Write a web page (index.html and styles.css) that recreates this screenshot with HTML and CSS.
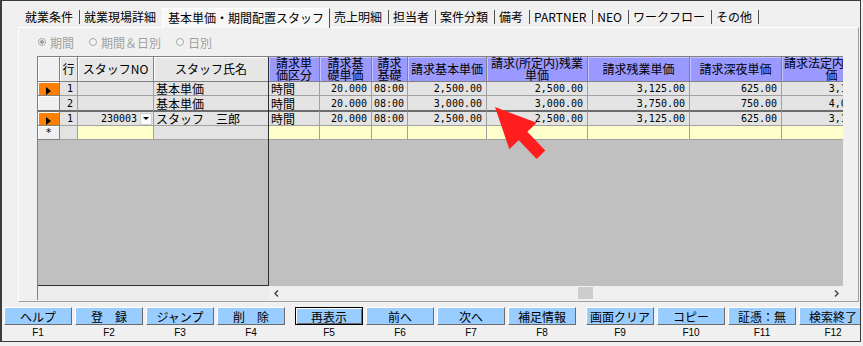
FILE: index.html
```html
<!DOCTYPE html>
<html lang="ja">
<head>
  <meta charset="UTF-8">
  <title>基本単価・期間配置スタッフ</title>
  <link rel="stylesheet" href="styles.css">
</head>
<body>

  <div class="window">

    <!-- Tabs -->
    <div class="tabs">
      <span class="tab">就業条件</span>
      <span class="tab no-sep">就業現場詳細</span>
      <span class="tab active">基本単価・期間配置スタッフ</span>
      <span class="tab">売上明細</span>
      <span class="tab">担当者</span>
      <span class="tab">案件分類</span>
      <span class="tab">備考</span>
      <span class="tab">PARTNER</span>
      <span class="tab">NEO</span>
      <span class="tab">ワークフロー</span>
      <span class="tab">その他</span>
    </div>

    <!-- Tab page -->
    <div class="page">
      <div class="radios">
        <span class="radio checked"><i></i>期間</span>
        <span class="radio"><i></i>期間＆日別</span>
        <span class="radio"><i></i>日別</span>
      </div>

      <div class="grid">
        <!-- frozen columns -->
        <div class="pane pane-left">
          <div class="pane-body">
            <table class="cells cells-left">
              <colgroup>
                <col class="c-mark"><col class="c-gyo"><col class="c-no"><col class="c-name">
              </colgroup>
              <tr class="head"><th class="mark"></th><th>行</th><th>スタッフNO</th><th>スタッフ氏名</th></tr>
              <tr><td class="mark cur"><i></i></td><td class="num">1</td><td></td><td>基本単価</td></tr>
              <tr class="split"><td class="mark"></td><td class="num">2</td><td></td><td>基本単価</td></tr>
              <tr><td class="mark cur"><i></i></td><td class="num">1</td><td class="num"><span class="combo">230003<b></b></span></td><td>スタッフ　三郎</td></tr>
              <tr class="new"><td class="mark star">*</td><td></td><td class="blank"></td><td></td></tr>
            </table>
            <div class="fill"></div>
          </div>
          <div class="pane-foot"></div>
        </div>

        <!-- scrolling columns -->
        <div class="pane pane-right">
          <div class="pane-body">
            <table class="cells cells-right">
              <colgroup>
                <col class="c-kbn"><col class="c-kiso"><col class="c-time"><col class="c-kihon">
                <col class="c-shotei"><col class="c-zan"><col class="c-shinya"><col class="c-hotei">
              </colgroup>
              <tr class="head">
                <th>請求単<br>価区分</th><th>請求基<br>礎単価</th><th>請求<br>基礎</th><th>請求基本単価</th>
                <th>請求(所定内)残業<br>単価</th><th>請求残業単価</th><th>請求深夜単価</th><th>請求法定内残業単<br>価</th>
              </tr>
              <tr>
                <td>時間</td><td class="num">20.000</td><td class="num">08:00</td><td class="num">2,500.00</td>
                <td class="num">2,500.00</td><td class="num">3,125.00</td><td class="num">625.00</td><td class="num">3,125.00</td>
              </tr>
              <tr class="split">
                <td>時間</td><td class="num">20.000</td><td class="num">08:00</td><td class="num">3,000.00</td>
                <td class="num">3,000.00</td><td class="num">3,750.00</td><td class="num">750.00</td><td class="num">4,000.00</td>
              </tr>
              <tr>
                <td>時間</td><td class="num">20.000</td><td class="num">08:00</td><td class="num">2,500.00</td>
                <td class="num">2,500.00</td><td class="num">3,125.00</td><td class="num">625.00</td><td class="num">3,125.00</td>
              </tr>
              <tr class="new"><td></td><td></td><td></td><td></td><td></td><td></td><td></td><td></td></tr>
            </table>
            <div class="fill"></div>
          </div>
          <div class="hscroll">
            <span class="sb-arrow"><svg width="5" height="7" viewBox="0 0 5 7"><path d="M4 0.5 L1 3.5 L4 6.5" stroke="#404040" stroke-width="1.4" fill="none"/></svg></span>
            <span class="sb-track"><span class="thumb"></span></span>
            <span class="sb-arrow"><svg width="5" height="7" viewBox="0 0 5 7"><path d="M1 0.5 L4 3.5 L1 6.5" stroke="#404040" stroke-width="1.4" fill="none"/></svg></span>
          </div>
        </div>
      </div>
    </div>

    <!-- Function keys -->
    <div class="fkeys">
      <div class="fgroup">
        <div class="fkey"><button>ヘルプ</button><span>F1</span></div>
        <div class="fkey"><button>登　録</button><span>F2</span></div>
        <div class="fkey"><button>ジャンプ</button><span>F3</span></div>
        <div class="fkey"><button>削　除</button><span>F4</span></div>
      </div>
      <div class="fgroup">
        <div class="fkey default"><button>再表示</button><span>F5</span></div>
        <div class="fkey"><button>前へ</button><span>F6</span></div>
        <div class="fkey"><button>次へ</button><span>F7</span></div>
        <div class="fkey"><button>補足情報</button><span>F8</span></div>
      </div>
      <div class="fgroup">
        <div class="fkey"><button>画面クリア</button><span>F9</span></div>
        <div class="fkey"><button>コピー</button><span>F10</span></div>
        <div class="fkey"><button>証憑：無</button><span>F11</span></div>
        <div class="fkey"><button>検索終了</button><span>F12</span></div>
      </div>
    </div>
  </div>

  <!-- red pointer arrow drawn over the grid -->
  <svg class="pointer" width="62" height="64" viewBox="490 100 62 64">
    <polygon points="495,107 536.7,122.8 527.3,131.8 545.3,150.5 536.7,158.9 518.7,140.2 509.3,149.2" fill="#ff1e1e"/>
  </svg>

</body>
</html>
```

FILE: styles.css
```css
* { box-sizing: border-box; }
body { margin: 0; background: #f0f0f0; font-family: "Noto Sans CJK JP", sans-serif; font-size: 12px; color: #000; }

.window { width: 861px; height: 342px; border: 1px solid #3c3c3c; border-left: 2px solid #3c3c3c; display: flex; flex-direction: column; overflow: hidden; }

/* tabs */
.tabs { display: flex; align-items: flex-end; height: 26px; padding-left: 19px; position: relative; z-index: 1; }
.tab { height: 14px; line-height: 14px; margin-bottom: 3px; padding: 0 6px 0 4px; border-right: 1px solid #505050; white-space: nowrap; }
.tab.no-sep { border-right: none; }
.tab.active { height: 20px; line-height: 18px; margin-bottom: -1px; padding: 0 5px; background: #f7f7f7; border-top: 1px solid #fff; border-left: 1px solid #fff; }

/* page */
.page { margin-left: 16px; width: 841px; height: 275px; border: 1px solid; border-color: #fff #a0a0a0 #a0a0a0 #fff; }
.radios { height: 28px; display: flex; align-items: center; gap: 15px; padding-left: 19px; color: #a0a0a0; }
.radio { display: inline-flex; align-items: center; gap: 4px; }
.radio i { width: 8px; height: 8px; border: 1px solid #a8a8a8; border-radius: 50%; background: #f4f4f4; }
.radio.checked i { background: radial-gradient(circle, #a0a0a0 1.6px, #f4f4f4 2.2px); }

/* grid */
.grid { margin-left: 18px; width: 806px; height: 244px; display: flex; border-top: 1px solid #808080; border-left: 1px solid #808080; background: #c0c0c0; }
.pane { display: flex; flex-direction: column; }
.pane-body { flex: 1; display: flex; flex-direction: column; overflow: hidden; }
.fill { flex: 1; }
.pane-left { width: 231px; }
.pane-left .pane-body { border-right: 1px solid #2e2e2e; border-bottom: 1px solid #2e2e2e; }
.pane-foot { height: 14px; background: #ececec; }
.pane-right { flex: 1; overflow: hidden; }

.cells { border-collapse: separate; border-spacing: 0; table-layout: fixed; }
.cells-left { width: 230px; }
.cells-right { width: 613px; }
.c-mark { width: 22px; } .c-gyo { width: 18px; } .c-no { width: 76px; } .c-name { width: 114px; }
.c-kbn { width: 51px; } .c-kiso { width: 52px; } .c-time { width: 36px; } .c-kihon { width: 79px; }
.c-shotei { width: 101px; } .c-zan { width: 102px; } .c-shinya { width: 92px; } .c-hotei { width: 100px; }

.cells tr { height: 14px; }
.cells tr.head { height: 25px; }
.cells tr.split { height: 16px; }
.cells th, .cells td { padding: 0 2px; border-right: 1px solid #a0a0a0; border-bottom: 1px solid #a0a0a0; white-space: nowrap; line-height: 13px; font-size: 12px; background: #e3e3e3; text-align: left; }
.cells tr.split td { border-bottom: 2px solid #6c6c6c; }
.cells th { font-weight: normal; text-align: center; line-height: 12px; background: #e6e6e6; border-color: #808080; box-shadow: inset 1px 1px #fff; }
.cells-right th { background: #9999ff; box-shadow: inset 1px 1px #c4c4ff; }
.cells-left th:last-child, .cells-left td:last-child { border-right: none; }
.cells td.num { text-align: right; padding-right: 4px; font-family: "DejaVu Sans Mono", monospace; font-size: 10px; }
.cells .mark { background: #f0f0f0; border-color: #808080; box-shadow: inset 1px 1px #fff; text-align: center; padding: 0; }
.cells .mark.cur { background: #ff8000; }
.cells .mark i { display: inline-block; vertical-align: middle; border-left: 5px solid #000; border-top: 4px solid transparent; border-bottom: 4px solid transparent; }
.cells .mark.star { font-family: "DejaVu Sans Mono", monospace; font-size: 11px; }
.cells .blank, .cells-right .new td { background: #ffffcc; }
.combo { display: flex; justify-content: flex-end; align-items: center; gap: 3px; }
.combo b { width: 12px; height: 12px; background: #fafafa; border: 1px solid #d0d0d0; display: flex; align-items: center; justify-content: center; margin-right: -3px; }
.combo b::after { content: ""; border-top: 3px solid #000; border-left: 3px solid transparent; border-right: 3px solid transparent; }

/* horizontal scrollbar */
.hscroll { height: 14px; display: flex; background: #f0f0f0; }
.sb-arrow { width: 14px; display: flex; align-items: center; justify-content: center; }
.sb-track { flex: 1; display: flex; align-items: center; }
.thumb { width: 15px; height: 12px; margin-left: 295px; background: #cdcdcd; }

/* function keys */
.fkeys { display: flex; gap: 10px; padding-left: 2px; margin-top: 5px; }
.fgroup { display: flex; gap: 3px; }
.fkey { width: 68px; flex-shrink: 0; display: flex; flex-direction: column; align-items: center; }
.fkey button { width: 68px; height: 18px; padding: 0; background: #99ccff; border: 1px solid; border-color: #fff #6b6b6b #6b6b6b #fff; font-family: "Noto Sans CJK JP", sans-serif; font-size: 12px; line-height: 15px; color: #000; }
.fkey.default button { border: 1px solid #000; box-shadow: inset 1px 1px #fff, inset -1px -1px #6b6b6b; }
.fkey span { margin-top: 2px; font-family: "Liberation Sans", sans-serif; font-size: 10px; line-height: 12px; }

.pointer { position: absolute; left: 490px; top: 100px; }
```
